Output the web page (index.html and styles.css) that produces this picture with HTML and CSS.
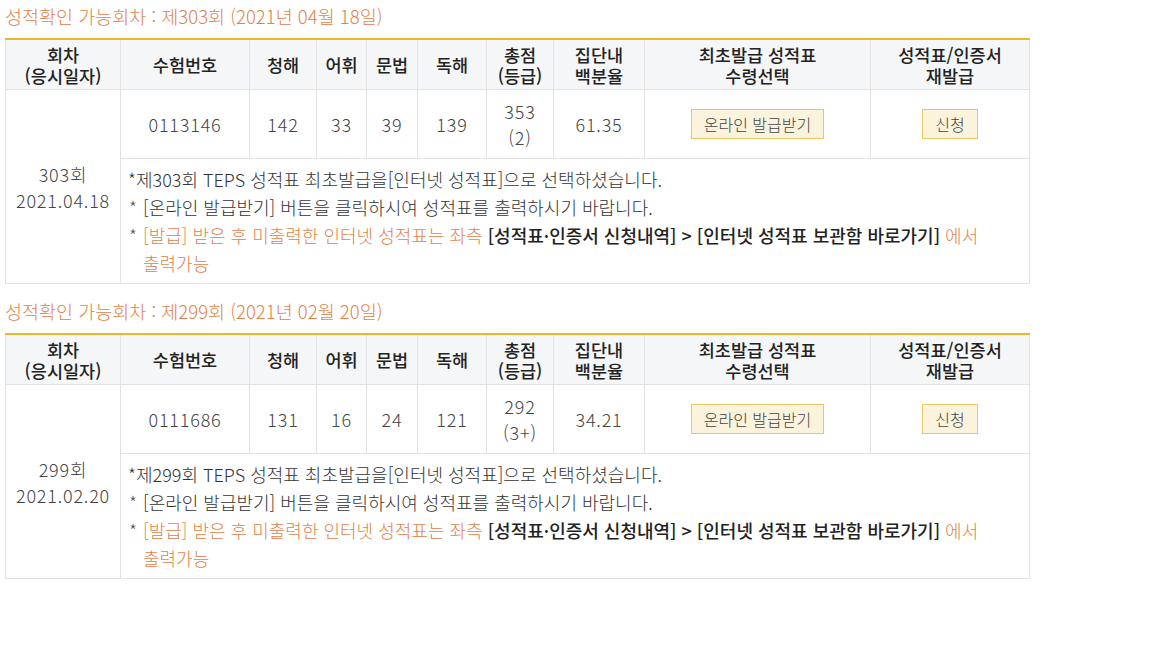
FILE: index.html
```html
<!DOCTYPE html>
<html lang="ko">
<head>
<meta charset="utf-8">
<link rel="stylesheet" href="styles.css">
</head>
<body>
<div class="page">
  <h3 class="round-title">성적확인 가능회차 : 제303회 (2021년 04월 18일)</h3>
  <table class="score-table">
    <colgroup>
      <col class="c-round"><col class="c-num"><col class="c-l"><col class="c-v"><col class="c-g"><col class="c-r"><col class="c-total"><col class="c-pct"><col class="c-issue"><col class="c-re">
    </colgroup>
    <thead>
      <tr>
        <th>회차<br>(응시일자)</th>
        <th>수험번호</th>
        <th>청해</th>
        <th>어휘</th>
        <th>문법</th>
        <th>독해</th>
        <th>총점<br>(등급)</th>
        <th>집단내<br>백분율</th>
        <th>최초발급 성적표<br>수령선택</th>
        <th>성적표/인증서<br>재발급</th>
      </tr>
    </thead>
    <tbody>
      <tr class="data-row">
        <td rowspan="2" class="round-cell">303회<br>2021.04.18</td>
        <td>0113146</td>
        <td>142</td>
        <td>33</td>
        <td>39</td>
        <td>139</td>
        <td class="total">353<br>(2)</td>
        <td>61.35</td>
        <td><button class="btn">온라인 발급받기</button></td>
        <td><button class="btn">신청</button></td>
      </tr>
      <tr>
        <td colspan="9" class="notes">
          <p class="note-first">*제303회 TEPS 성적표 최초발급을[인터넷 성적표]으로 선택하셨습니다.</p>
          <p class="note">[온라인 발급받기] 버튼을 클릭하시여 성적표를 출력하시기 바랍니다.</p>
          <p class="note warn">[발급] 받은 후 미출력한 인터넷 성적표는 좌측 <strong>[성적표·인증서 신청내역] &gt; [인터넷 성적표 보관함 바로가기]</strong> 에서<br>출력가능</p>
        </td>
      </tr>
    </tbody>
  </table>

  <h3 class="round-title second">성적확인 가능회차 : 제299회 (2021년 02월 20일)</h3>
  <table class="score-table">
    <colgroup>
      <col class="c-round"><col class="c-num"><col class="c-l"><col class="c-v"><col class="c-g"><col class="c-r"><col class="c-total"><col class="c-pct"><col class="c-issue"><col class="c-re">
    </colgroup>
    <thead>
      <tr>
        <th>회차<br>(응시일자)</th>
        <th>수험번호</th>
        <th>청해</th>
        <th>어휘</th>
        <th>문법</th>
        <th>독해</th>
        <th>총점<br>(등급)</th>
        <th>집단내<br>백분율</th>
        <th>최초발급 성적표<br>수령선택</th>
        <th>성적표/인증서<br>재발급</th>
      </tr>
    </thead>
    <tbody>
      <tr class="data-row">
        <td rowspan="2" class="round-cell">299회<br>2021.02.20</td>
        <td>0111686</td>
        <td>131</td>
        <td>16</td>
        <td>24</td>
        <td>121</td>
        <td class="total">292<br>(3+)</td>
        <td>34.21</td>
        <td><button class="btn">온라인 발급받기</button></td>
        <td><button class="btn">신청</button></td>
      </tr>
      <tr>
        <td colspan="9" class="notes">
          <p class="note-first">*제299회 TEPS 성적표 최초발급을[인터넷 성적표]으로 선택하셨습니다.</p>
          <p class="note">[온라인 발급받기] 버튼을 클릭하시여 성적표를 출력하시기 바랍니다.</p>
          <p class="note warn">[발급] 받은 후 미출력한 인터넷 성적표는 좌측 <strong>[성적표·인증서 신청내역] &gt; [인터넷 성적표 보관함 바로가기]</strong> 에서<br>출력가능</p>
        </td>
      </tr>
    </tbody>
  </table>
</div>
</body>
</html>
```

FILE: styles.css
```css
html, body {
  margin: 0;
  padding: 0;
  background: #fff;
}
body {
  font-family: "Noto Sans CJK KR", "Noto Sans", sans-serif;
  font-weight: 300;
  color: #333;
  font-size: 16px;
}
.page {
  padding: 0 5px;
  width: 1024px;
}
.round-title {
  margin: 0 0 6px;
  font-size: 18.5px;
  font-weight: 300;
  line-height: 32px;
  color: #df8249;
}
.round-title.second {
  margin-top: 11px;
  margin-bottom: 6px;
}
.score-table {
  width: 1024px;
  border-collapse: collapse;
  table-layout: fixed;
  border-top: 2px solid #e9b82e;
}
.c-round { width: 115px; }
.c-num { width: 129px; }
.c-l { width: 67px; }
.c-v { width: 50px; }
.c-g { width: 51px; }
.c-r { width: 69px; }
.c-total { width: 67px; }
.c-pct { width: 91px; }
.c-issue { width: 226px; }
.c-re { width: 159px; }
.score-table th {
  background: #f5f6f7;
  font-weight: 500;
  color: #222;
  font-size: 17.5px;
  line-height: 21px;
  height: 49px;
  padding: 0;
  border: 1px solid #e2e2e2;
  border-top: none;
  text-align: center;
}
.score-table td {
  border: 1px solid #e2e2e2;
  text-align: center;
  padding: 0;
  font-size: 18px;
  letter-spacing: 0.8px;
  color: #444;
}
.data-row td {
  height: 68px;
  line-height: 26px;
}
.round-cell {
  line-height: 29px;
}
.btn {
  font-family: inherit;
  font-weight: 300;
  font-size: 16px;
  letter-spacing: 0;
  color: #444;
  background: #fcf3dd;
  border: 1px solid #e6c766;
  padding: 0 12px;
  height: 30px;
  line-height: 27px;
  cursor: pointer;
}
.notes {
  text-align: left !important;
  padding: 6px 7px 6px !important;
  letter-spacing: 0 !important;
  line-height: 28px;
  color: #333 !important;
}
.notes p {
  margin: 0;
}
.note {
  position: relative;
  padding-left: 15px;
}
.note::before {
  content: "*";
  position: absolute;
  left: 1px;
  top: 0;
  color: #555;
}
.warn {
  color: #df8249;
}
.warn strong {
  color: #222;
  font-weight: 500;
}
```
